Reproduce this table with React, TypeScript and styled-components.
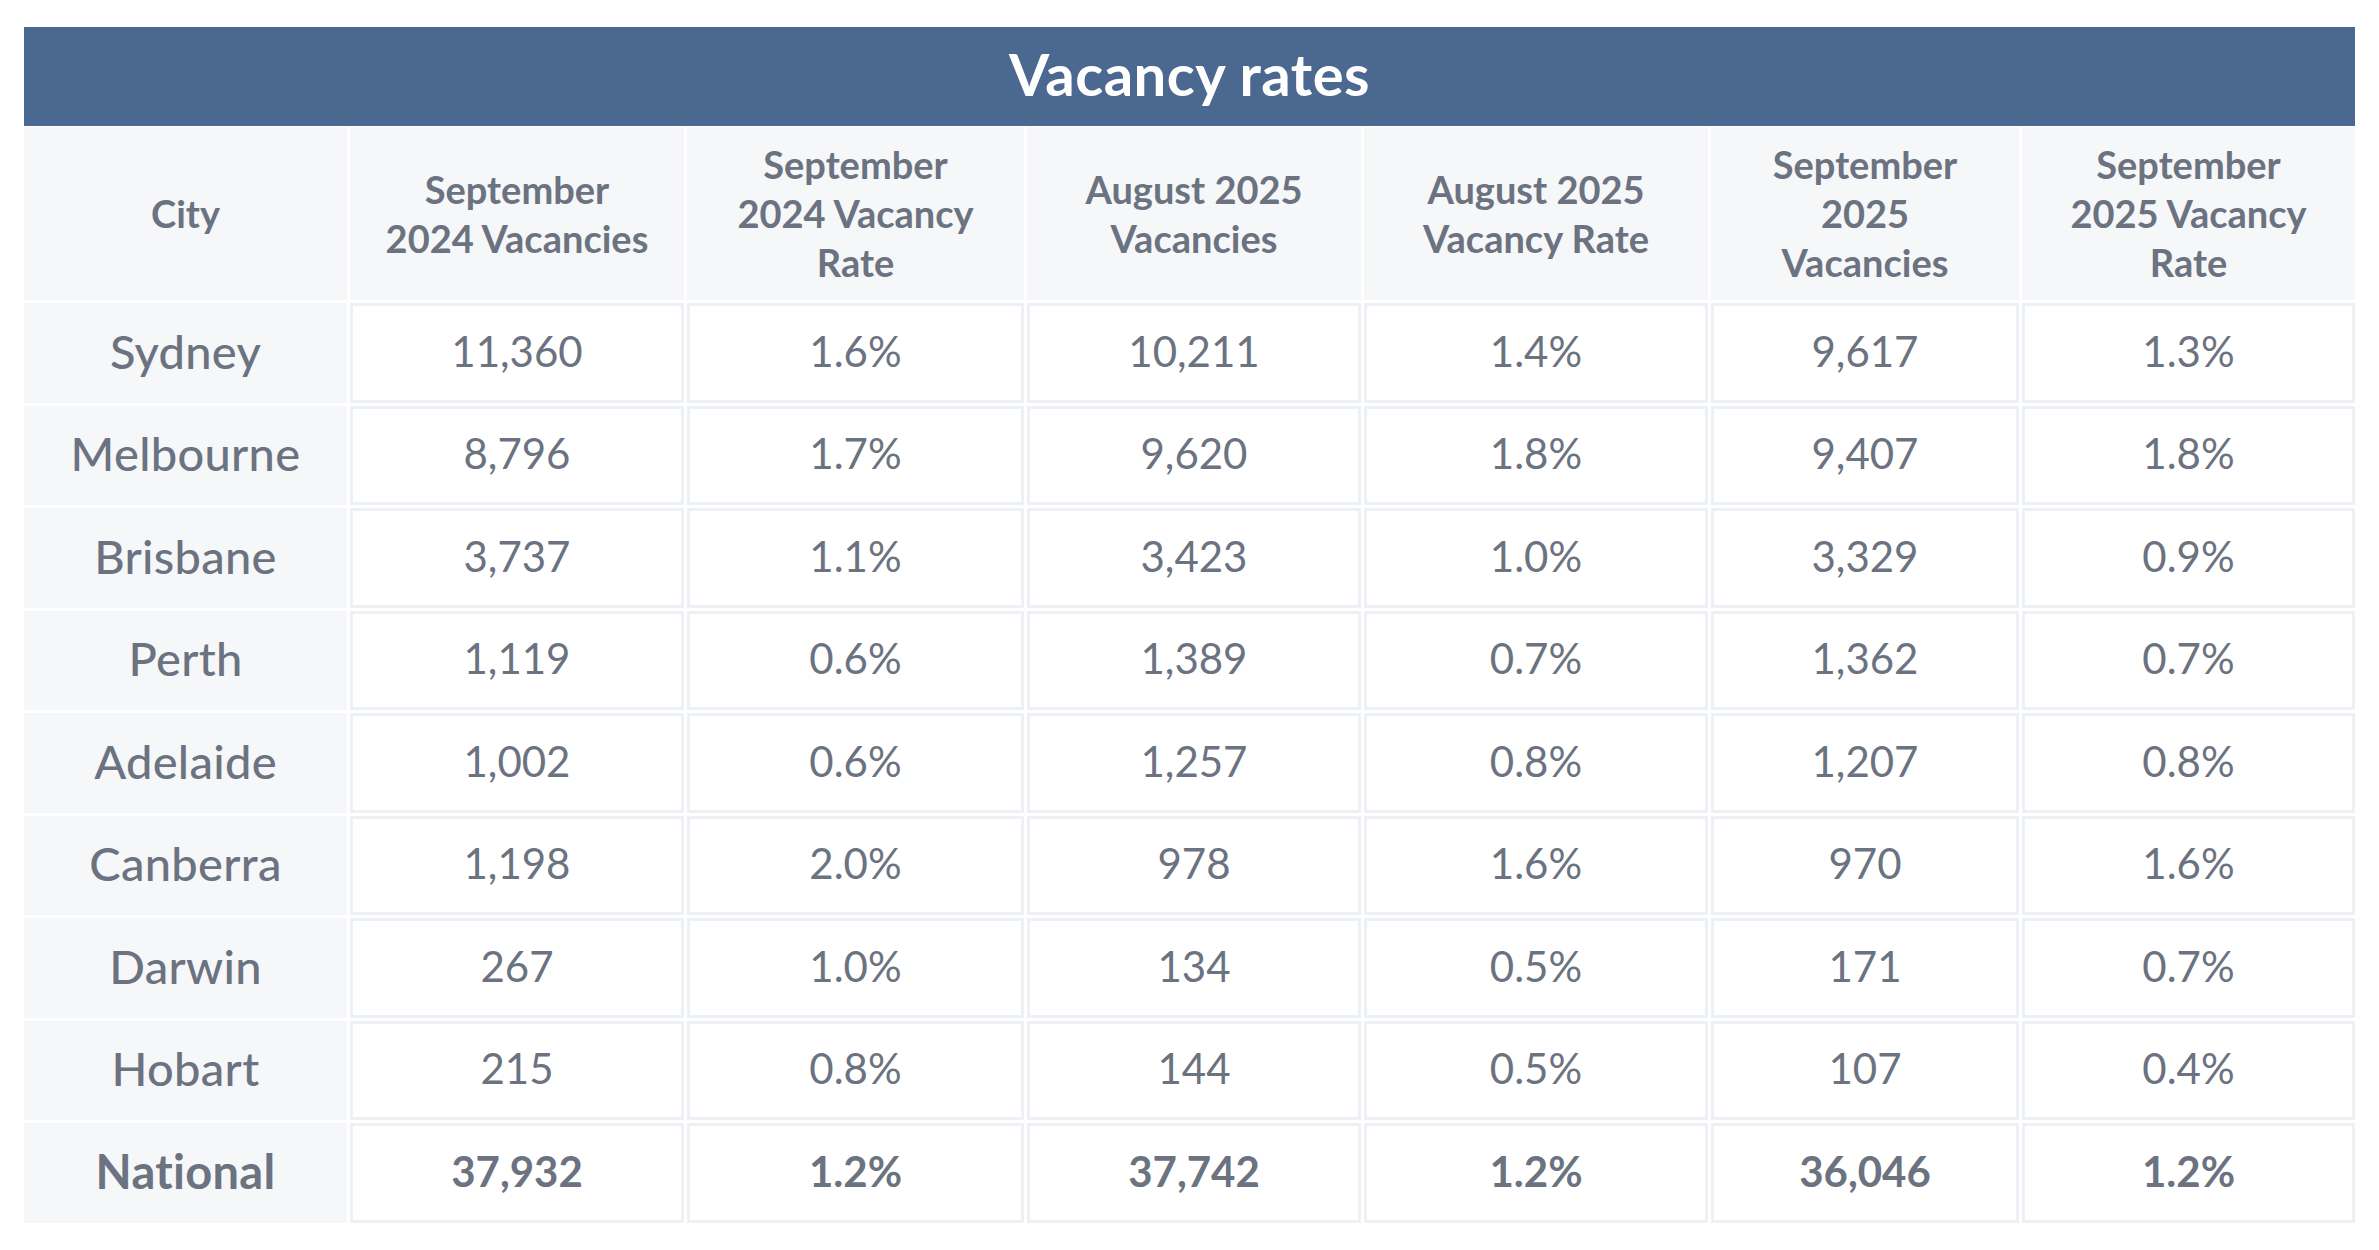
import React from "react";
import styled, { createGlobalStyle } from "styled-components";

const GlobalStyle = createGlobalStyle`
  html, body {
    margin: 0;
    padding: 0;
    background: #ffffff;
  }
  body {
    font-family: Lato, "Noto Sans", "Open Sans", sans-serif;
  }
`;

const Page = styled.div`
  padding: 27px 24px 0 24px;
  width: 2331px;
`;

const TitleBar = styled.div`
  box-sizing: border-box;
  height: 99px;
  padding-bottom: 6px;
  background: #4b6890;
  display: flex;
  align-items: center;
  justify-content: center;
  color: #ffffff;
  font-weight: 700;
  font-size: 58px;
  letter-spacing: 0.5px;
`;

const Grid = styled.div`
  margin-top: 1px;
  display: grid;
  grid-template-columns: 323px 334px 337px 334px 344px 308px 333px;
  grid-template-rows: 173px;
  grid-auto-rows: 99.5px;
  gap: 3px;
`;

const HeadCell = styled.div`
  background: #f6f7f9;
  display: flex;
  align-items: center;
  justify-content: center;
  text-align: center;
  color: #6b7280;
  font-weight: 700;
  font-size: 38px;
  line-height: 49px;
`;

const CityCell = styled.div<{ $total?: boolean }>`
  box-sizing: border-box;
  padding-bottom: 4px;
  background: #f6f7f9;
  display: flex;
  align-items: center;
  justify-content: center;
  color: #6b7280;
  font-weight: ${(p) => (p.$total ? 700 : 500)};
  font-size: 47px;
  letter-spacing: 0.3px;
`;

const DataCell = styled.div<{ $total?: boolean }>`
  box-sizing: border-box;
  padding-bottom: 4px;
  background: #ffffff;
  border: 3px solid #edf0f4;
  display: flex;
  align-items: center;
  justify-content: center;
  color: #6b7280;
  font-weight: ${(p) => (p.$total ? 700 : 400)};
  font-size: 42px;
`;

const headers: string[][] = [
  ["City"],
  ["September", "2024 Vacancies"],
  ["September", "2024 Vacancy", "Rate"],
  ["August 2025", "Vacancies"],
  ["August 2025", "Vacancy Rate"],
  ["September", "2025", "Vacancies"],
  ["September", "2025 Vacancy", "Rate"],
];

const rows: string[][] = [
  ["Sydney", "11,360", "1.6%", "10,211", "1.4%", "9,617", "1.3%"],
  ["Melbourne", "8,796", "1.7%", "9,620", "1.8%", "9,407", "1.8%"],
  ["Brisbane", "3,737", "1.1%", "3,423", "1.0%", "3,329", "0.9%"],
  ["Perth", "1,119", "0.6%", "1,389", "0.7%", "1,362", "0.7%"],
  ["Adelaide", "1,002", "0.6%", "1,257", "0.8%", "1,207", "0.8%"],
  ["Canberra", "1,198", "2.0%", "978", "1.6%", "970", "1.6%"],
  ["Darwin", "267", "1.0%", "134", "0.5%", "171", "0.7%"],
  ["Hobart", "215", "0.8%", "144", "0.5%", "107", "0.4%"],
  ["National", "37,932", "1.2%", "37,742", "1.2%", "36,046", "1.2%"],
];

export default function App() {
  return (
    <>
      <GlobalStyle />
      <Page>
        <TitleBar>Vacancy rates</TitleBar>
        <Grid>
          {headers.map((lines, i) => (
            <HeadCell key={`h${i}`}>
              <span>
                {lines.map((l, j) => (
                  <React.Fragment key={j}>
                    {j > 0 && <br />}
                    {l}
                  </React.Fragment>
                ))}
              </span>
            </HeadCell>
          ))}
          {rows.map((r) => {
            const total = r[0] === "National";
            return (
              <React.Fragment key={r[0]}>
                <CityCell $total={total}>{r[0]}</CityCell>
                {r.slice(1).map((v, ci) => (
                  <DataCell key={ci} $total={total}>
                    {v}
                  </DataCell>
                ))}
              </React.Fragment>
            );
          })}
        </Grid>
      </Page>
    </>
  );
}
